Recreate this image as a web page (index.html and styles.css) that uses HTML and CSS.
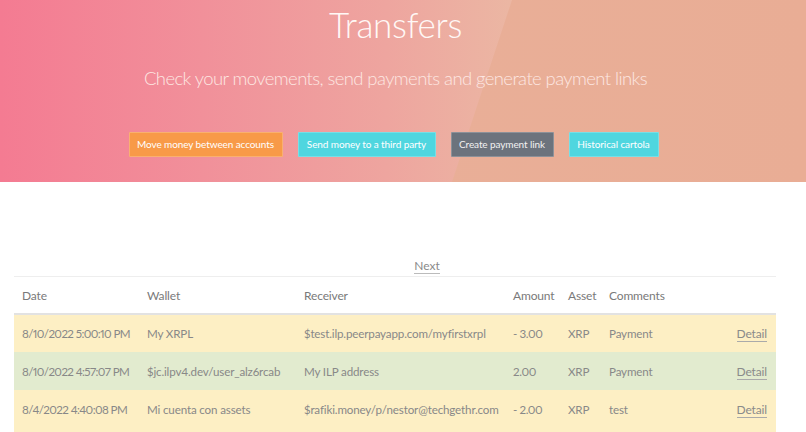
FILE: index.html
```html
<!DOCTYPE html>
<html>
<head>
<meta charset="utf-8">
<link rel="stylesheet" href="styles.css">
</head>
<body>
<header class="hero">
  <div class="hero-shade"></div>
  <div class="hero-inner">
    <h1 class="hero-title">Transfers</h1>
    <p class="hero-sub">Check your movements, send payments and generate payment links</p>
    <div class="actions">
      <a class="btn btn-orange btn-w1">Move money between accounts</a>
      <a class="btn btn-cyan btn-w2">Send money to a third party</a>
      <a class="btn btn-gray btn-w3">Create payment link</a>
      <a class="btn btn-cyan btn-w4">Historical cartola</a>
    </div>
  </div>
</header>
<main class="content">
  <div class="pager"><a class="pager-link">Next</a></div>
  <table class="tx">
    <colgroup>
      <col class="c-date"><col class="c-wallet"><col class="c-recv"><col class="c-amt"><col class="c-asset"><col class="c-com"><col class="c-act">
    </colgroup>
    <thead>
      <tr><th>Date</th><th>Wallet</th><th>Receiver</th><th>Amount</th><th>Asset</th><th>Comments</th><th></th></tr>
    </thead>
    <tbody>
      <tr class="row-warn"><td class="dt">8/10/2022 5:00:10 PM</td><td>My XRPL</td><td>$test.ilp.peerpayapp.com/myfirstxrpl</td><td class="num">- 3.00</td><td>XRP</td><td>Payment</td><td class="act"><a class="detail">Detail</a></td></tr>
      <tr class="row-ok"><td class="dt">8/10/2022 4:57:07 PM</td><td>$jc.ilpv4.dev/user_alz6rcab</td><td>My ILP address</td><td class="num">2.00</td><td>XRP</td><td>Payment</td><td class="act"><a class="detail">Detail</a></td></tr>
      <tr class="row-warn"><td class="dt">8/4/2022 4:40:08 PM</td><td>Mi cuenta con assets</td><td>$rafiki.money/p/nestor@techgethr.com</td><td class="num">- 2.00</td><td>XRP</td><td>test</td><td class="act"><a class="detail">Detail</a></td></tr>
      <tr class="row-warn row-peek"><td></td><td></td><td></td><td></td><td></td><td></td><td></td></tr>
    </tbody>
  </table>
</main>
</body>
</html>
```
FILE: styles.css
```css
html, body { margin: 0; padding: 0; }
body {
  font-family: Lato, "Open Sans", sans-serif;
  background: #fff;
  overflow: hidden;
  height: 432px;
}
.hero {
  position: relative;
  height: 182px;
  background: linear-gradient(90deg, #f47b92 0%, #f1909a 25%, #eea59f 48%, #ebb7a3 64%);
  overflow: hidden;
}
.hero-shade {
  position: absolute;
  inset: 0;
  background: linear-gradient(90deg, #e9b09a 0%, #e9ad95 100%);
  clip-path: polygon(512px 0, 100% 0, 100% 100%, 452px 100%);
}
.hero-inner {
  position: relative;
  display: flex;
  flex-direction: column;
  align-items: center;
  padding-right: 15px;
}
.hero-title {
  margin: 0;
  padding-top: 4px;
  font-weight: 300;
  font-size: 35px;
  line-height: 40px;
  color: #fff8f6;
  letter-spacing: -0.3px;
}
.hero-sub {
  margin: 22px 0 0;
  font-weight: 300;
  font-size: 18.5px;
  line-height: 24px;
  color: #fde7e2;
  letter-spacing: -0.6px;
}
.actions {
  display: flex;
  gap: 15px;
  margin-top: 42px;
  margin-right: 4px;
}
.btn {
  display: block;
  height: 25px;
  line-height: 23px;
  box-sizing: border-box;
  padding: 0;
  text-align: center;
  white-space: nowrap;
  font-size: 10px;
  color: #fff;
  border: 1px solid rgba(255,255,255,0.22);
  border-radius: 1px;
  letter-spacing: -0.1px;
}
.btn-orange { background: #f89a48; }
.btn-cyan { background: #4fd6df; }
.btn-gray { background: #6c737d; color: #f2f2f2; }
.btn-w1 { width: 154px; }
.btn-w2 { width: 138px; }
.btn-w3 { width: 103px; }
.btn-w4 { width: 90px; }

.content {
  padding: 76px 30px 0 14px;
}
.pager {
  display: flex;
  justify-content: center;
  padding-left: 64px;
  height: 18px;
}
.pager-link {
  font-size: 12px;
  line-height: 16px;
  color: #8a8a8a;
  border-bottom: 1px solid #bbb;
  height: 15px;
}
.tx {
  width: 762px;
  table-layout: fixed;
  border-collapse: collapse;
  font-size: 11.6px;
  letter-spacing: -0.15px;
  font-variant-numeric: proportional-nums;
  color: #888;
}
.c-date { width: 125px; }
.c-wallet { width: 157px; }
.c-recv { width: 209px; }
.c-amt { width: 55px; }
.c-asset { width: 41px; }
.c-com { width: 100px; }
.tx th {
  text-align: left;
  font-weight: 400;
  font-size: 12px;
  color: #7a7a7a;
  height: 36px;
  padding: 0 8px;
  border-top: 1px solid #eee;
  border-bottom: 2px solid #e2e2e2;
}
.tx td {
  height: 38px;
  padding: 0 8px;
  box-sizing: border-box;
  white-space: nowrap;
  overflow: hidden;
}
.tx td.dt { letter-spacing: -0.6px; }
.tx td.num { letter-spacing: -0.4px; }
.tx td.act { padding-right: 9px; }
.row-warn td { background: #fdefc4; }
.row-ok td { background: #e2ebcf; }
.act { text-align: right; }
.detail {
  font-size: 12px;
  color: #8a8a8a;
  border-bottom: 1px solid #aaa;
}
```
